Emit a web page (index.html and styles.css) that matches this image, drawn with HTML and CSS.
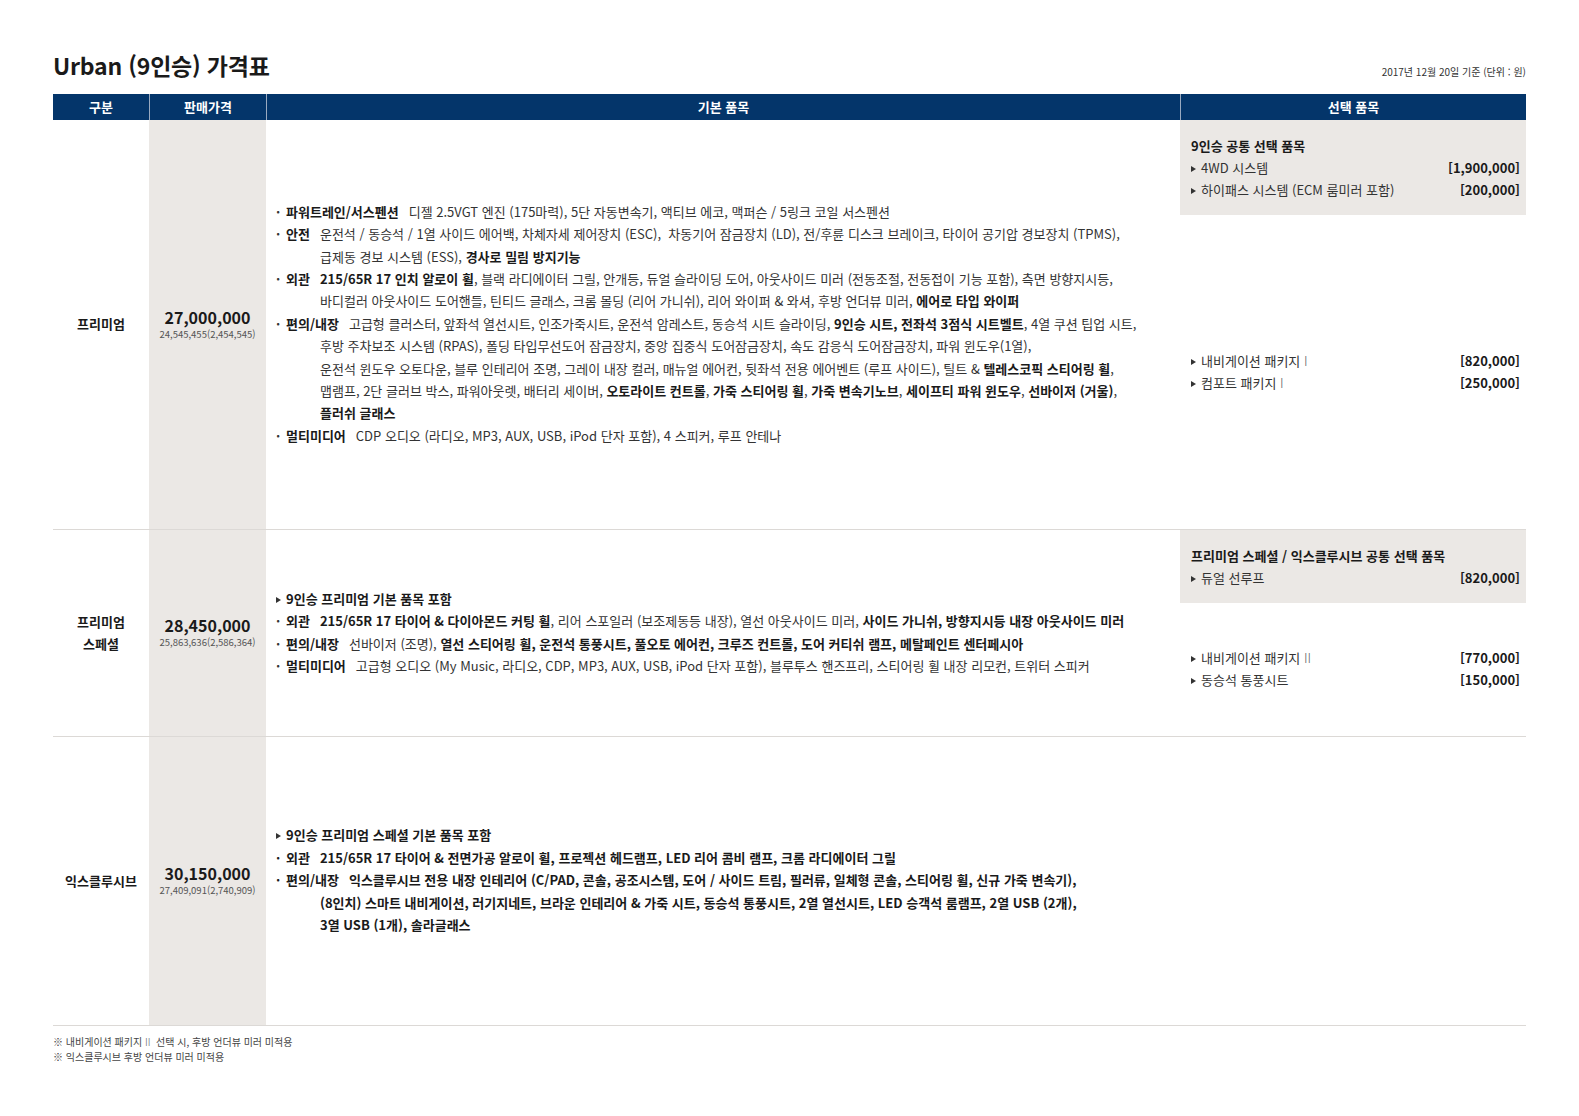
FILE: index.html
```html
<!DOCTYPE html>
<html lang="ko">
<head>
<meta charset="utf-8">
<title>Urban (9인승) 가격표</title>
<link rel="stylesheet" href="styles.css">
</head>
<body>
<div class="page">
  <div class="top">
    <h1 class="title">Urban (9인승) 가격표</h1>
    <div class="date">2017년 12월 20일 기준 (단위 : 원)</div>
  </div>

  <div class="table">
    <div class="th">구분</div>
    <div class="th sep">판매가격</div>
    <div class="th sep">기본 품목</div>
    <div class="th sep">선택 품목</div>

    <!-- Row 1 -->
    <div class="td trim">프리미엄</div>
    <div class="td price">
      <div class="p-main">27,000,000</div>
      <div class="p-sub">24,545,455(2,454,545)</div>
    </div>
    <div class="td basic">
      <div class="item"><span class="dot">·</span><b class="lbl">파워트레인/서스펜션</b>디젤 2.5VGT 엔진 (175마력), 5단 자동변속기, 액티브 에코, 맥퍼슨 / 5링크 코일 서스펜션</div>
      <div class="item"><span class="dot">·</span><b class="lbl">안전</b>운전석 / 동승석 / 1열 사이드 에어백, 차체자세 제어장치 (ESC),&nbsp; 차동기어 잠금장치 (LD), 전/후륜 디스크 브레이크, 타이어 공기압 경보장치 (TPMS),<br>급제동 경보 시스템 (ESS), <b>경사로 밀림 방지기능</b></div>
      <div class="item"><span class="dot">·</span><b class="lbl">외관</b><b>215/65R 17 인치 알로이 휠</b>, 블랙 라디에이터 그릴, 안개등, 듀얼 슬라이딩 도어, 아웃사이드 미러 (전동조절, 전동접이 기능 포함), 측면 방향지시등,<br>바디컬러 아웃사이드 도어핸들, 틴티드 글래스, 크롬 몰딩 (리어 가니쉬), 리어 와이퍼 &amp; 와셔, 후방 언더뷰 미러, <b>에어로 타입 와이퍼</b></div>
      <div class="item"><span class="dot">·</span><b class="lbl">편의/내장</b>고급형 클러스터, 앞좌석 열선시트, 인조가죽시트, 운전석 암레스트, 동승석 시트 슬라이딩, <b>9인승 시트, 전좌석 3점식 시트벨트</b>, 4열 쿠션 팁업 시트,<br>후방 주차보조 시스템 (RPAS), 폴딩 타입무선도어 잠금장치, 중앙 집중식 도어잠금장치, 속도 감응식 도어잠금장치, 파워 윈도우(1열),<br>운전석 윈도우 오토다운, 블루 인테리어 조명, 그레이 내장 컬러, 매뉴얼 에어컨, 뒷좌석 전용 에어벤트 (루프 사이드), 틸트 &amp; <b>텔레스코픽 스티어링 휠</b>,<br>맵램프, 2단 글러브 박스, 파워아웃렛, 배터리 세이버, <b>오토라이트 컨트롤</b>, <b>가죽 스티어링 휠</b>, <b>가죽 변속기노브</b>, <b>세이프티 파워 윈도우</b>, <b>선바이저 (거울)</b>,<br><b>플러쉬 글래스</b></div>
      <div class="item"><span class="dot">·</span><b class="lbl">멀티미디어</b>CDP 오디오 (라디오, MP3, AUX, USB, iPod 단자 포함), 4 스피커, 루프 안테나</div>
    </div>
    <div class="td opts">
      <div class="opt-box">
        <div class="opt-title">9인승 공통 선택 품목</div>
        <div class="opt"><span class="name"><span class="tri"></span>4WD 시스템</span><span class="amt">[1,900,000]</span></div>
        <div class="opt"><span class="name"><span class="tri"></span>하이패스 시스템 (ECM 룸미러 포함)</span><span class="amt">[200,000]</span></div>
      </div>
      <div class="opt-rest">
        <div class="opt"><span class="name"><span class="tri"></span>내비게이션 패키지 <span class="roman">I</span></span><span class="amt">[820,000]</span></div>
        <div class="opt"><span class="name"><span class="tri"></span>컴포트 패키지 <span class="roman">I</span></span><span class="amt">[250,000]</span></div>
      </div>
    </div>

    <!-- Row 2 -->
    <div class="td trim">프리미엄<br>스페셜</div>
    <div class="td price">
      <div class="p-main">28,450,000</div>
      <div class="p-sub">25,863,636(2,586,364)</div>
    </div>
    <div class="td basic">
      <div class="item"><b><span class="tri"></span>9인승 프리미엄 기본 품목 포함</b></div>
      <div class="item"><span class="dot">·</span><b class="lbl">외관</b><b>215/65R 17 타이어 &amp; 다이아몬드 커팅 휠</b>, 리어 스포일러 (보조제동등 내장), 열선 아웃사이드 미러, <b>사이드 가니쉬, 방향지시등 내장 아웃사이드 미러</b></div>
      <div class="item"><span class="dot">·</span><b class="lbl">편의/내장</b>선바이저 (조명), <b>열선 스티어링 휠, 운전석 통풍시트, 풀오토 에어컨, 크루즈 컨트롤, 도어 커티쉬 램프, 메탈페인트 센터페시아</b></div>
      <div class="item"><span class="dot">·</span><b class="lbl">멀티미디어</b>고급형 오디오 (My Music, 라디오, CDP, MP3, AUX, USB, iPod 단자 포함), 블루투스 핸즈프리, 스티어링 휠 내장 리모컨, 트위터 스피커</div>
    </div>
    <div class="td opts">
      <div class="opt-box">
        <div class="opt-title">프리미엄 스페셜 / 익스클루시브 공통 선택 품목</div>
        <div class="opt"><span class="name"><span class="tri"></span>듀얼 선루프</span><span class="amt">[820,000]</span></div>
      </div>
      <div class="opt-rest">
        <div class="opt"><span class="name"><span class="tri"></span>내비게이션 패키지 <span class="roman">II</span></span><span class="amt">[770,000]</span></div>
        <div class="opt"><span class="name"><span class="tri"></span>동승석 통풍시트</span><span class="amt">[150,000]</span></div>
      </div>
    </div>

    <!-- Row 3 -->
    <div class="td trim">익스클루시브</div>
    <div class="td price">
      <div class="p-main">30,150,000</div>
      <div class="p-sub">27,409,091(2,740,909)</div>
    </div>
    <div class="td basic strong">
      <div class="item"><span class="tri"></span>9인승 프리미엄 스페셜 기본 품목 포함</div>
      <div class="item"><span class="dot">·</span><span class="lbl">외관</span>215/65R 17 타이어 &amp; 전면가공 알로이 휠, 프로젝션 헤드램프, LED 리어 콤비 램프, 크롬 라디에이터 그릴</div>
      <div class="item"><span class="dot">·</span><span class="lbl">편의/내장</span>익스클루시브 전용 내장 인테리어 (C/PAD, 콘솔, 공조시스템, 도어 / 사이드 트림, 필러류, 일체형 콘솔, 스티어링 휠, 신규 가죽 변속기),<br>(8인치) 스마트 내비게이션, 러기지네트, 브라운 인테리어 &amp; 가죽 시트, 동승석 통풍시트, 2열 열선시트, LED 승객석 룸램프, 2열 USB (2개),<br>3열 USB (1개), 솔라글래스</div>
    </div>
    <div class="td opts"></div>
  </div>

  <div class="notes">
    <p>※ 내비게이션 패키지 <span class="roman">II</span>&nbsp; 선택 시, 후방 언더뷰 미러 미적용</p>
    <p>※ 익스클루시브 후방 언더뷰 미러 미적용</p>
  </div>
</div>
</body>
</html>
```

FILE: styles.css
```css
* {
  box-sizing: border-box;
  margin: 0;
  padding: 0;
}

body {
  font-family: "Noto Sans CJK KR", "Noto Sans", sans-serif;
  color: #333;
  background: #fff;
}

b {
  font-weight: 700;
  color: #1a1a1a;
}

.page {
  width: 1526px;
  padding: 50px 0 0 53px;
}

.top {
  display: flex;
  justify-content: space-between;
  align-items: flex-end;
  height: 30px;
  margin-bottom: 13.5px;
}

.title {
  font-size: 23px;
  line-height: 30px;
  font-weight: 700;
  color: #1a1a1a;
  letter-spacing: -0.2px;
}

.date {
  font-size: 10px;
  line-height: 14px;
  color: #333;
  padding-bottom: 1px;
}

.table {
  display: grid;
  grid-template-columns: 96px 117px 914px 346px;
  grid-template-rows: 26px 410px 207px 289px;
}

.th {
  background: #04356a;
  color: #fff;
  font-size: 13px;
  font-weight: 700;
  display: flex;
  align-items: center;
  justify-content: center;
}

.th.sep {
  border-left: 1px solid #9aaac0;
}

.td {
  border-bottom: 1px solid #dcd9d6;
}

.trim {
  display: flex;
  align-items: center;
  justify-content: center;
  text-align: center;
  font-size: 13px;
  line-height: 22px;
  font-weight: 700;
  color: #1a1a1a;
}

.price {
  background: #ebe8e5;
  display: flex;
  flex-direction: column;
  align-items: center;
  justify-content: center;
}

.p-main {
  font-size: 16px;
  line-height: 19px;
  font-weight: 700;
  color: #1a1a1a;
}

.p-sub {
  font-size: 9.5px;
  line-height: 13px;
  margin-top: 1px;
  color: #555;
}

.basic {
  display: flex;
  flex-direction: column;
  justify-content: center;
  padding-left: 10px;
  font-size: 13px;
  line-height: 22.4px;
  color: #333;
  white-space: nowrap;
}

.basic.strong {
  font-weight: 700;
  color: #1a1a1a;
}

.item {
  padding-left: 44px;
  text-indent: -44px;
}

.dot {
  display: inline-block;
  width: 10px;
  text-indent: 0;
  font-weight: 700;
}

.lbl {
  display: inline-block;
  text-indent: 0;
  margin-right: 10px;
  font-weight: 700;
  color: #1a1a1a;
}

.tri {
  display: inline-block;
  width: 0;
  height: 0;
  border-left: 5px solid #333;
  border-top: 3px solid transparent;
  border-bottom: 3px solid transparent;
  margin-right: 5px;
  vertical-align: 1px;
  text-indent: 0;
}

.roman {
  font-weight: 300;
  color: #666;
}

.opts {
  display: flex;
  flex-direction: column;
  font-size: 13px;
  line-height: 22.2px;
  color: #333;
}

.opt-box {
  background: #ebe8e5;
  padding: 15px 6px 14px 11px;
}

.opt-rest {
  flex: 1;
  display: flex;
  flex-direction: column;
  justify-content: center;
  padding: 0 6px 0 11px;
}

.opt-title {
  font-weight: 700;
  color: #1a1a1a;
}

.opt {
  display: flex;
  justify-content: space-between;
}

.amt {
  font-weight: 700;
  color: #1a1a1a;
}

.notes {
  padding-top: 8px;
  font-size: 10px;
  line-height: 15px;
  color: #444;
}
```
